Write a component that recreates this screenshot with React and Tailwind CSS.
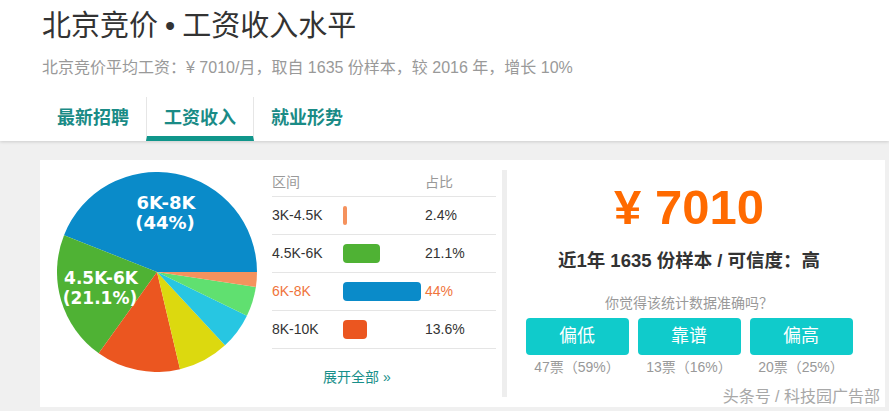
import React from "react";

const slices = [
  { pct: 44, color: "#0a8bc9" },
  { pct: 21.1, color: "#4fb234" },
  { pct: 13.6, color: "#eb5620" },
  { pct: 8.2, color: "#dcd90f" },
  { pct: 5.9, color: "#27c6e2" },
  { pct: 4.8, color: "#60e070" },
  { pct: 2.4, color: "#f5925d" },
];

const rows = [
  { range: "3K-4.5K", pct: 2.4, color: "#f5925d" },
  { range: "4.5K-6K", pct: 21.1, color: "#4fb234" },
  { range: "6K-8K", pct: 44, color: "#0a8bc9", active: true },
  { range: "8K-10K", pct: 13.6, color: "#eb5620" },
];

const votes = [
  { label: "偏低", text: "47票（59%）" },
  { label: "靠谱", text: "13票（16%）" },
  { label: "偏高", text: "20票（25%）" },
];

const point = (deg) => {
  const a = (deg * Math.PI) / 180;
  return [100 + 100 * Math.cos(a), 100 - 100 * Math.sin(a)];
};

const Pie = () => {
  let start = 0;
  return (
    <svg width="200" height="200" viewBox="0 0 200 200" className="shrink-0">
      {slices.map((s, i) => {
        const end = start + s.pct * 3.6;
        const [x0, y0] = point(start);
        const [x1, y1] = point(end);
        const large = end - start > 180 ? 1 : 0;
        start = end;
        return (
          <path
            key={i}
            d={`M100 100 L${x0} ${y0} A100 100 0 ${large} 0 ${x1} ${y1} Z`}
            fill={s.color}
          />
        );
      })}
      <g fill="#fff" fontFamily="'DejaVu Sans', sans-serif" fontWeight="bold" textAnchor="middle">
        <text x="109" y="37" fontSize="18">6K-8K</text>
        <text x="108" y="57" fontSize="18">(44%)</text>
        <text x="44" y="112" fontSize="17">4.5K-6K</text>
        <text x="43" y="132" fontSize="17">(21.1%)</text>
      </g>
    </svg>
  );
};

const Tab = ({ children, active }) => (
  <div
    className={
      "h-[44px] px-[17px] pt-[4px] flex items-center text-[18px] font-bold text-[#1a8b86] border-b-[5px] " +
      (active ? "border-x border-x-[#e6e6e6] border-b-[#10968b]" : "border-b-transparent")
    }
  >
    {children}
  </div>
);

export default function App() {
  return (
    <div
      className="relative w-[889px] h-[411px] overflow-hidden bg-[#f0f0f0]"
      style={{ fontFamily: "'Liberation Sans', 'Noto Sans CJK SC', sans-serif" }}
    >
      {/* header */}
      <div className="relative z-10 h-[141px] bg-white pl-[40px] shadow-[0_1px_3px_rgba(0,0,0,0.15)]">
        <h1 className="pt-[8px] pl-[2px] text-[29px] leading-[36px] text-[#333]">
          北京竞价<span className="mx-[7px]">•</span>工资收入水平
        </h1>
        <p className="mt-[13px] pl-[2px] text-[16px] leading-[22px] text-[#999]">
          北京竞价平均工资：¥ 7010/月，取自 1635 份样本，较 2016 年，增长 10%
        </p>
        <div className="mt-[18px] flex">
          <Tab>最新招聘</Tab>
          <Tab active>工资收入</Tab>
          <Tab>就业形势</Tab>
        </div>
      </div>

      {/* card */}
      <div className="mt-[19px] ml-[40px] w-[845px] h-[247px] bg-white flex">
        <div className="ml-[17px] mt-[12px]">
          <Pie />
        </div>

        <div className="ml-[15px] w-[224px] pt-[9px] text-[14px]">
          <div className="h-[28px] flex items-center border-b border-[#e5e5e5] text-[#999]">
            <span className="w-[153px]">区间</span>
            <span>占比</span>
          </div>
          {rows.map((r) => (
            <div
              key={r.range}
              className={
                "h-[38px] flex items-center border-b border-[#e5e5e5] " +
                (r.active ? "text-[#f0743b]" : "text-[#333]")
              }
            >
              <span className="w-[71px]">{r.range}</span>
              <span className="w-[82px]">
                <span
                  className="block h-[19px] rounded-[4px]"
                  style={{ width: Math.max(4, r.pct * 1.77), backgroundColor: r.color }}
                />
              </span>
              <span>{r.pct}%</span>
            </div>
          ))}
          <div className="mt-[18px] pl-[51px] leading-[20px] text-[#198f8a]">展开全部 »</div>
        </div>

        <div className="ml-[6px] mt-[10px] w-[5px] h-[227px] bg-[#eeeeee]" />

        <div className="flex-1 mr-[14px] flex flex-col items-center">
          <div className="pt-[23px] text-[49px] leading-[48px] font-bold text-[#ff6a00]">¥ 7010</div>
          <div className="mt-[18px] text-[18.5px] leading-[24px] font-bold text-[#333]">
            近1年 1635 份样本 / 可信度：高
          </div>
          <div className="mt-[20px] text-[14px] leading-[20px] text-[#999]">你觉得该统计数据准确吗？</div>
          <div className="mt-[5px] flex gap-[9px]">
            {votes.map((v) => (
              <div key={v.label} className="w-[103px] flex flex-col items-center">
                <button className="w-[103px] h-[37px] rounded-[4px] bg-[#10cbcb] text-white text-[18px]">
                  {v.label}
                </button>
                <span className="mt-[2px] text-[14px] leading-[20px] text-[#999]">{v.text}</span>
              </div>
            ))}
          </div>
        </div>
      </div>

      {/* watermark */}
      <div className="absolute right-[9px] bottom-[4px] text-[16px] leading-[20px] text-[#a8a8a8]">
        头条号 / 科技园广告部
      </div>
    </div>
  );
}
